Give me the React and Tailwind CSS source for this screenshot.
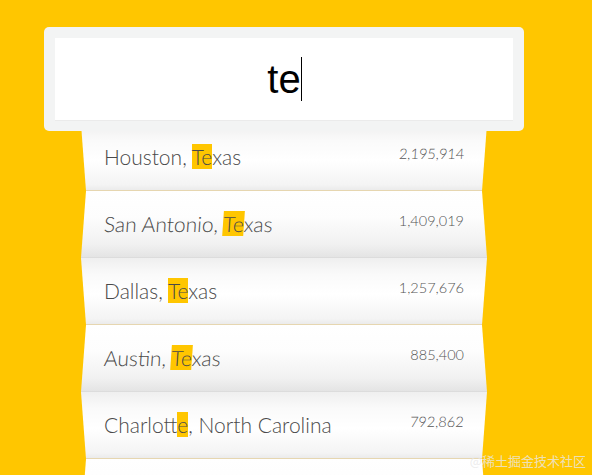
import React from "react";

const rows = [
  { pre: "Houston, ", hl: "Te", post: "xas", num: "2,195,914", nameItalic: false, numItalic: true },
  { pre: "San Antonio, ", hl: "Te", post: "xas", num: "1,409,019", nameItalic: true, numItalic: false },
  { pre: "Dallas, ", hl: "Te", post: "xas", num: "1,257,676", nameItalic: false, numItalic: false },
  { pre: "Austin, ", hl: "Te", post: "xas", num: "885,400", nameItalic: true, numItalic: false },
  { pre: "Charlot", hl: "te", post: ", North Carolina", num: "792,862", nameItalic: false, numItalic: true },
  { pre: "", hl: "", post: "", num: "", nameItalic: false, numItalic: false },
];

function Row({ r, i }) {
  const even = i % 2 === 0;
  const cls = even
    ? "[clip-path:polygon(0_0,100%_0,calc(100%-5px)_100%,5px_100%)] bg-[linear-gradient(180deg,#efefef_0%,#fafafa_25%,#ffffff_55%,#f4f4f4_92%,#ebebeb_100%)] border-b border-[#e6d6b0]"
    : "[clip-path:polygon(5px_0,calc(100%-5px)_0,100%_100%,0_100%)] bg-[linear-gradient(180deg,#ffffff_0%,#fdfdfd_40%,#f1f1f1_80%,#e4e4e4_100%)] border-b border-[#dcdcdc]";
  return (
    <div className={`h-[67px] flex items-center justify-between px-[23px] ${cls}`}>
      <span
        className={`inline-block text-[21px] leading-[26px] text-[#4a4a4a] font-light ${r.nameItalic ? "skew-x-[-4deg]" : ""}`}
        style={{ fontFamily: "Lato, 'Noto Sans', sans-serif" }}
      >
        {r.pre}
        {r.hl && <span className="bg-[#ffc600]">{r.hl}</span>}
        {r.post}
      </span>
      <span
        className={`inline-block text-[14.5px] leading-[18px] text-[#555555] font-light mb-[6px] ${r.numItalic ? "skew-x-[-4deg]" : ""}`}
        style={{ fontFamily: "Lato, 'Noto Sans', sans-serif" }}
      >
        {r.num}
      </span>
    </div>
  );
}

export default function App() {
  return (
    <div className="w-[592px] h-[475px] overflow-hidden bg-[#ffc600] relative">
      <div className="pt-[27px] pl-[44px]">
        <div className="relative z-10 w-[480px] h-[104px] bg-[#f3f4f4] rounded-[5px] p-[11px]">
          <div className="h-[83px] bg-white border-b border-[#ebebeb] flex items-center justify-center">
            <span
              className="text-[40px] leading-[44px] text-black relative"
              style={{ fontFamily: "'Liberation Sans', Arial, sans-serif" }}
            >
              te
              <span className="absolute right-[-1px] top-0 w-px h-[44px] bg-black"></span>
            </span>
          </div>
        </div>
        <div className="-mt-[7px] ml-[37px] w-[406px]">
          {rows.map((r, i) => (
            <Row key={i} r={r} i={i} />
          ))}
        </div>
      </div>
      <div
        className="absolute right-[6px] bottom-[5px] text-[13px] text-[#e8e8e8]/80"
        style={{ fontFamily: "'Noto Sans CJK SC', sans-serif" }}
      >
        @稀土掘金技术社区
      </div>
    </div>
  );
}
